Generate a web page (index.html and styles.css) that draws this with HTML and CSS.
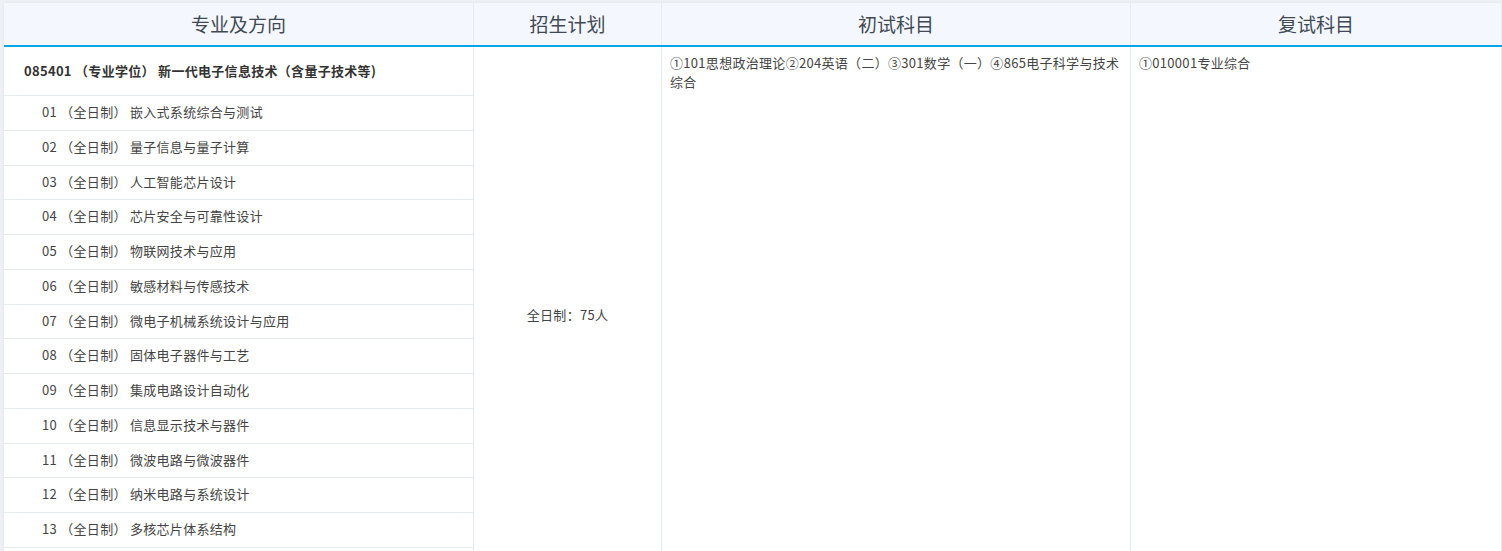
FILE: index.html
```html
<!DOCTYPE html>
<html lang="zh-CN">
<head>
  <meta charset="UTF-8">
  <meta name="viewport" content="width=device-width, initial-scale=1.0">
  <title>招生专业目录</title>
  <link rel="stylesheet" href="styles.css">
</head>
<body>
  <div class="table">
    <div class="thead">
      <div class="th">专业及方向</div>
      <div class="th">招生计划</div>
      <div class="th">初试科目</div>
      <div class="th">复试科目</div>
    </div>

    <div class="tbody">
      <div class="td major">
        <div class="major-title">085401 （专业学位） 新一代电子信息技术（含量子技术等)</div>
        <div class="dir">01 （全日制） 嵌入式系统综合与测试</div>
        <div class="dir">02 （全日制） 量子信息与量子计算</div>
        <div class="dir">03 （全日制） 人工智能芯片设计</div>
        <div class="dir">04 （全日制） 芯片安全与可靠性设计</div>
        <div class="dir">05 （全日制） 物联网技术与应用</div>
        <div class="dir">06 （全日制） 敏感材料与传感技术</div>
        <div class="dir">07 （全日制） 微电子机械系统设计与应用</div>
        <div class="dir">08 （全日制） 固体电子器件与工艺</div>
        <div class="dir">09 （全日制） 集成电路设计自动化</div>
        <div class="dir">10 （全日制） 信息显示技术与器件</div>
        <div class="dir">11 （全日制） 微波电路与微波器件</div>
        <div class="dir">12 （全日制） 纳米电路与系统设计</div>
        <div class="dir">13 （全日制） 多核芯片体系结构</div>
        <div class="dir"></div>
      </div>
      <div class="td plan">全日制：75人</div>
      <div class="td subj">①101思想政治理论②204英语（二）③301数学（一）④865电子科学与技术综合</div>
      <div class="td subj">①010001专业综合</div>
    </div>
  </div>
</body>
</html>
```

FILE: styles.css
```css
html, body {
  overflow: hidden;
}

body {
  margin: 0;
  padding: 3px 0 0 4px;
  background: #eef2f6;
  font-family: "Noto Sans CJK SC", "Noto Sans", sans-serif;
  color: #333;
}

.table {
  width: 1498px;
  background: #fff;
  box-shadow: 0 0 4px rgba(0, 0, 0, 0.06);
}

.thead, .tbody {
  display: grid;
  grid-template-columns: 470px 188px 469px 1fr;
}

.thead {
  background: #f4f7fd;
  border-bottom: 2px solid #00a6e6;
}

.th {
  height: 42px;
  line-height: 42px;
  text-align: center;
  font-size: 19px;
  color: #3f4a56;
  border-right: 1px solid #e6ebf0;
}

.td {
  border-right: 1px solid #e6ebf0;
  font-size: 13px;
  letter-spacing: 0.3px;
}

.major-title {
  height: 48px;
  line-height: 47px;
  padding-left: 20px;
  font-weight: bold;
  border-bottom: 1px solid #e6ebf0;
}

.dir {
  box-sizing: border-box;
  height: 34.75px;
  line-height: 32.75px;
  padding-left: 38px;
  color: #444;
  border-bottom: 1px solid #e6ebf0;
}

.plan {
  display: flex;
  align-items: center;
  justify-content: center;
  color: #444;
}

.subj {
  padding: 6px 8px;
  line-height: 19px;
  color: #444;
}
```
